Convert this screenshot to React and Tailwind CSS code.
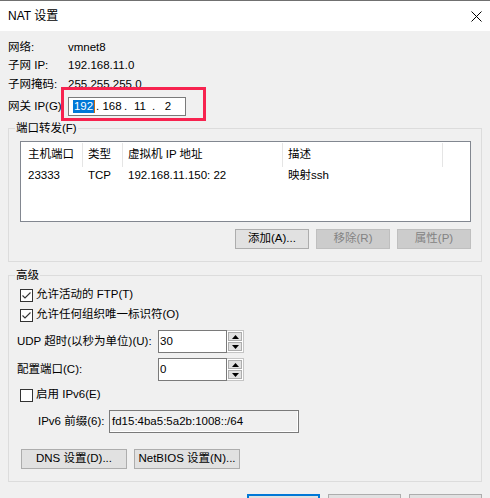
import React from 'react';

// small win32-style building blocks
function CheckBox({ checked }) {
  return (
    <svg width="13" height="13" viewBox="0 0 13 13" className="shrink-0">
      <rect x="0.5" y="0.5" width="12" height="12" fill="#fff" stroke="#333" />
      {checked && (
        <path d="M2.5 6.5 L5 9 L10.5 3.5" fill="none" stroke="#333" strokeWidth="1.1" />
      )}
    </svg>
  );
}

function Btn({ children, disabled, wide }) {
  const size = wide ? 'w-[106px] h-[20px]' : 'w-[74px] h-[20px]';
  if (disabled) {
    return (
      <div className={`${size} flex items-center justify-center border border-[#bfbfbf] bg-[#cccccc] text-[#838383]`}>
        {children}
      </div>
    );
  }
  return (
    <div className={`${size} flex items-center justify-center border border-[#adadad] bg-[#e1e1e1] text-black`}>
      {children}
    </div>
  );
}

function Arrow({ up }) {
  return (
    <svg width="7" height="4" viewBox="0 0 7 4">
      <path d={up ? 'M0 4 L3.5 0 L7 4 Z' : 'M0 0 L3.5 4 L7 0 Z'} fill="#000" />
    </svg>
  );
}

function Spinner({ value }) {
  return (
    <div className="flex h-[23px] w-[86px]">
      <div className="flex flex-1 items-center border border-[#7a7a7a] bg-white pl-[1px]">{value}</div>
      <div className="flex w-[17px] flex-col gap-[1px] border border-l-0 border-[#c4c4c4] bg-white p-[1px]">
        <div className="flex flex-1 items-center justify-center border border-[#adadad] bg-[#e1e1e1]">
          <Arrow up />
        </div>
        <div className="flex flex-1 items-center justify-center border border-[#adadad] bg-[#e1e1e1]">
          <Arrow />
        </div>
      </div>
    </div>
  );
}

function InfoRow({ label, value, className }) {
  return (
    <div className={`flex items-center ${className}`}>
      <span className="w-[60px]">{label}</span>
      <span>{value}</span>
    </div>
  );
}

export default function App() {
  const cols = [
    { title: '主机端口', w: 'w-[62px] pl-[7px]', value: '23333' },
    { title: '类型', w: 'w-[40px] pl-[5px]', value: 'TCP' },
    { title: '虚拟机 IP 地址', w: 'w-[160px] pl-[5px]', value: '192.168.11.150: 22' },
    { title: '描述', w: 'w-[160px] pl-[5px]', value: '映射ssh' },
  ];

  return (
    <div className="h-[498px] w-[490px] overflow-hidden border-t border-[#707070] bg-[#f0f0f0] text-[11.5px] text-black font-['Liberation_Sans','Noto_Sans_CJK_SC',sans-serif]">
      {/* title bar */}
      <div className="flex h-[30px] items-center justify-between bg-white pl-[8px] pr-[8px]">
        <span className="text-[12px]">NAT 设置</span>
        <svg width="11" height="11" viewBox="0 0 11 11">
          <path d="M0.5 0.5 L10.5 10.5 M10.5 0.5 L0.5 10.5" stroke="#000" strokeWidth="1" />
        </svg>
      </div>

      <div className="flex flex-col px-[8px] pt-[8px]">
        <InfoRow label="网络:" value="vmnet8" className="h-[18px]" />
        <InfoRow label="子网 IP:" value="192.168.11.0" className="h-[17px]" />
        <InfoRow label="子网掩码:" value="255.255.255.0" className="mt-[2px] h-[18px]" />
        <div className="mt-[3px] flex h-[19px] items-center">
          <span className="w-[60px]">网关 IP(G)</span>
          <div className="relative h-[19px] w-[118px]">
            <div className="flex h-full items-center border border-[#7a7a7a] bg-white pl-[3px]">
              <span className="flex w-[24px] items-center justify-center">
                <span className="bg-[#0078d7] px-[1px] leading-[13px] text-white">192</span>
                <span className="h-[13px] w-[1px] bg-[#c86a14]" />
              </span>
              <span className="w-[4px]">.</span>
              <span className="w-[24px] text-center">168</span>
              <span className="w-[4px]">.</span>
              <span className="w-[24px] text-center">11</span>
              <span className="w-[4px]">.</span>
              <span className="w-[24px] text-center">2</span>
            </div>
            {/* annotation box over the gateway field */}
            <div className="absolute -left-[7px] -top-[10px] z-10 h-[34px] w-[145px] border-[3px] border-[#f7234f]" />
          </div>
        </div>

        {/* port forwarding */}
        <fieldset className="mt-[4px] border border-[#dcdcdc] pb-[12px]">
          <legend className="ml-[6px] px-[1px] leading-[16px]">端口转发(F)</legend>
          <div className="ml-[11px] mr-[10px] mt-[5px] h-[81px] border border-[#828790] bg-white">
            <div className="flex h-[25px]">
              {cols.map((c) => (
                <div key={c.title} className={`${c.w} mt-[1px] flex items-center border-r border-[#e5e5e5]`}>
                  {c.title}
                </div>
              ))}
            </div>
            <div className="flex h-[17px] items-center">
              {cols.map((c) => (
                <div key={c.title} className={c.w}>
                  {c.value}
                </div>
              ))}
            </div>
          </div>
          <div className="mr-[10px] mt-[7px] flex justify-end gap-[7px]">
            <Btn>添加(A)...</Btn>
            <Btn disabled>移除(R)</Btn>
            <Btn disabled>属性(P)</Btn>
          </div>
        </fieldset>

        {/* advanced */}
        <fieldset className="mt-[5px] border border-[#dcdcdc] pb-[12px]">
          <legend className="ml-[6px] px-[1px] leading-[16px]">高级</legend>
          <div className="mt-[2px] flex h-[20px] items-center gap-[3px] pl-[11px]">
            <CheckBox checked />
            <span>允许活动的 FTP(T)</span>
          </div>
          <div className="flex h-[20px] items-center gap-[3px] pl-[11px]">
            <CheckBox checked />
            <span>允许任何组织唯一标识符(O)</span>
          </div>
          <div className="mt-[5px] flex h-[23px] items-center pl-[8px]">
            <span className="w-[141px]">UDP 超时(以秒为单位)(U):</span>
            <Spinner value="30" />
          </div>
          <div className="mt-[5px] flex h-[23px] items-center pl-[8px]">
            <span className="w-[141px]">配置端口(C):</span>
            <Spinner value="0" />
          </div>
          <div className="mt-[4px] flex h-[20px] items-center gap-[3px] pl-[11px]">
            <CheckBox />
            <span>启用 IPv6(E)</span>
          </div>
          <div className="mt-[5px] flex h-[23px] items-center pl-[29px]">
            <span className="w-[71px]">IPv6 前缀(6):</span>
            <div className="flex h-[23px] w-[190px] items-center border border-[#7a7a7a] bg-[#f0f0f0] pl-[2px] shadow-[inset_-1px_-1px_0_#ffffff]">
              fd15:4ba5:5a2b:1008::/64
            </div>
          </div>
          <div className="mt-[16px] flex gap-[7px] pl-[12px]">
            <Btn wide>DNS 设置(D)...</Btn>
            <Btn wide>NetBIOS 设置(N)...</Btn>
          </div>
        </fieldset>

        {/* dialog buttons, only their top edge is in view */}
        <div className="mt-[12px] flex justify-end gap-[8px]">
          <div className="h-[23px] w-[73px] border-2 border-[#0078d7] bg-[#e1e1e1]" />
          <div className="h-[23px] w-[73px] border border-[#adadad] bg-[#e1e1e1]" />
          <div className="h-[23px] w-[73px] border border-[#adadad] bg-[#e1e1e1]" />
        </div>
      </div>
    </div>
  );
}
